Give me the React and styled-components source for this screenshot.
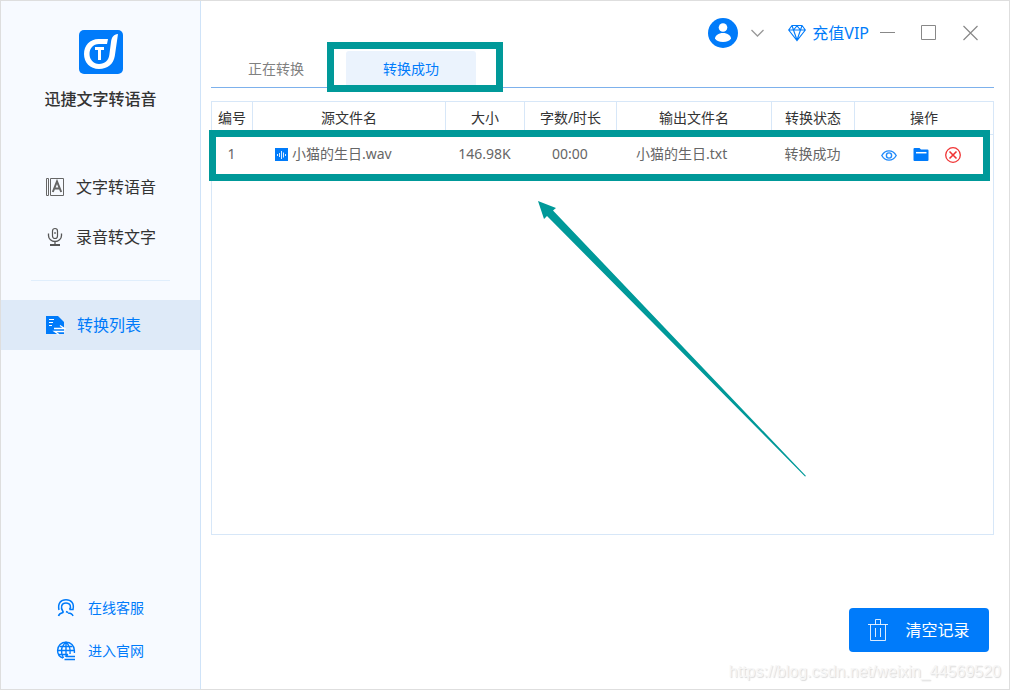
import React from 'react';
import styled, { createGlobalStyle } from 'styled-components';

const blue = '#007bfa';
const teal = '#009999';
const line = '#d7e7f8';

const GlobalStyle = createGlobalStyle`
  *, *::before, *::after { box-sizing: border-box; }
  body {
    margin: 0;
    color: #333;
    background: #fff;
    font-family: "Noto Sans", "Noto Sans CJK SC", sans-serif;
    font-size: 14px;
    line-height: 20px;
  }
  button { font: inherit; color: inherit; background: none; border: 0; padding: 0; cursor: pointer; }
  a { text-decoration: none; color: inherit; }
  svg { display: block; flex: none; }
`;

const Window = styled.div`
  position: relative;
  display: grid;
  grid-template-columns: 200px 1fr;
  min-height: 100vh;
  border: 1px solid #dedede;
`;

const Sidebar = styled.aside`
  display: flex;
  flex-direction: column;
  background: #f7faff;
  border-right: 1px solid #cfe3f8;
`;

const Brand = styled.div`
  display: flex;
  flex-direction: column;
  align-items: center;
  gap: 13px;
  padding-top: 29px;
  height: 161px;
`;

const BrandName = styled.h1`
  margin: 0;
  font-size: 16px;
  font-weight: 500;
  line-height: 24px;
`;

const NavItem = styled.button`
  display: flex;
  align-items: center;
  gap: 11px;
  width: 100%;
  height: 50px;
  padding-left: 44px;
  font-size: 16px;
  line-height: 24px;
  color: ${(p) => (p.$active ? blue : '#333')};
  background: ${(p) => (p.$active ? '#deeaf8' : 'transparent')};
`;

const Divider = styled.hr`
  height: 1px;
  margin: 18px 30px 19px;
  border: 0;
  background: #e0eefc;
`;

const SideLinks = styled.div`
  display: flex;
  flex-direction: column;
  gap: 23px;
  margin-top: auto;
  padding: 0 0 28px 55px;
`;

const SideLink = styled.a`
  display: flex;
  align-items: center;
  gap: 12px;
  color: ${blue};
`;

const Main = styled.main`
  display: flex;
  flex-direction: column;
  min-width: 0;
  padding: 0 15px 37px 10px;
`;

const TitleBar = styled.header`
  display: flex;
  justify-content: flex-end;
  align-items: center;
  height: 33px;
  margin-top: 15px;
  padding-right: 16px;
`;

const IconButton = styled.button`
  display: flex;
  margin-left: ${(p) => p.$gap || 0}px;
`;

const VipButton = styled.button`
  display: flex;
  align-items: center;
  gap: 6px;
  margin: 0 11px 0 24px;
  font-size: 16px;
  line-height: 24px;
  color: ${blue};
`;

const Tabs = styled.div`
  display: flex;
  gap: 5px;
  padding-top: 2px;
  border-bottom: 1px solid #7db1ec;
`;

const Tab = styled.button`
  position: relative;
  width: 130px;
  height: 36px;
  border-radius: 3px 3px 0 0;
  color: ${(p) => (p.$active ? blue : '#808080')};
  background: ${(p) => (p.$active ? '#ebf3fd' : 'transparent')};
`;

const Marker = styled.span`
  position: absolute;
  inset: ${(p) => p.$inset};
  height: ${(p) => p.$height}px;
  border: 7px solid ${teal};
  pointer-events: none;
`;

const Panel = styled.section`
  position: relative;
  flex: 1;
  margin: 13px 0 73px;
  border: 1px solid ${line};
`;

const Table = styled.table`
  width: 100%;
  table-layout: fixed;
  border-collapse: separate;
  border-spacing: 0;
`;

const Col = styled.col`
  width: ${(p) => (p.$w ? `${p.$w}px` : 'auto')};
`;

const Th = styled.th`
  height: 33px;
  padding: 0;
  font-weight: 400;
  border-bottom: 1px solid ${line};
  border-right: 1px solid ${line};
  &:last-child { border-right: 0; }
`;

const Td = styled.td`
  height: 38px;
  padding: 0 2px 0 ${(p) => p.$indent || 0}px;
  text-align: ${(p) => (p.$indent ? 'left' : 'center')};
  color: #666;
`;

const FileName = styled.span`
  display: flex;
  align-items: center;
  gap: 4px;
`;

const Actions = styled.span`
  display: flex;
  justify-content: center;
  gap: 16px;
  padding: 2px 4px 0 0;
`;

const Footer = styled.footer`
  display: flex;
  justify-content: flex-end;
  padding-right: 5px;
`;

const ClearButton = styled.button`
  display: flex;
  align-items: center;
  justify-content: center;
  gap: 17px;
  width: 140px;
  height: 44px;
  border-radius: 4px;
  font-size: 16px;
  color: #fff;
  background: ${blue};
`;

const Watermark = styled.span`
  position: absolute;
  right: 8px;
  bottom: 7px;
  font-family: "Liberation Sans", sans-serif;
  font-size: 16px;
  color: #f6f6f6;
  text-shadow: 1px 1px 1px #dadada;
`;

const Arrow = styled.svg`
  position: absolute;
  left: 326px;
  top: 99px;
  pointer-events: none;
`;

const Logo = () => (
  <svg width="44" height="44" viewBox="0 0 44 44" aria-hidden="true">
    <rect width="44" height="44" rx="5" fill={blue} />
    <path d="M29 9L28 14H20C14 14 10.500 18.500 10.500 24C10.500 29.500 14.500 34 20 34C26 34 29.500 30.500 30.300 25L32 12C32.500 7.500 34.500 4.500 39 4L35.800 26C34.500 34 28.500 39 20 39C11 39 5 32.500 5 24C5 15.500 11 9 19.500 9Z" fill="#fff" />
    <path d="M16 17H25V20H22V30H19V20H16Z" fill="#fff" />
  </svg>
);

const BookIcon = () => (
  <svg width="20" height="20" viewBox="0 0 20 20" fill="none" stroke="#666" aria-hidden="true">
    <path d="M1.500 1.500H3.500V18.500H1.500ZM5.500 1.500H18.500V18.500H5.500Z" />
    <path d="M7.800 15L12 4.500L16.200 15M9.500 11.500H14.500" strokeWidth="2" />
  </svg>
);

const MicIcon = () => (
  <svg width="20" height="20" viewBox="0 0 20 20" fill="none" stroke="#555" aria-hidden="true">
    <rect x="7.500" y="1.500" width="5" height="10" rx="2.500" strokeWidth="1.200" />
    <path d="M3.500 6.500V8.500C3.500 12 6.500 14.500 10 14.500S16.500 12 16.500 8.500V6.500M10 14.500V18" strokeWidth="1.300" />
    <path d="M5 18H15" strokeWidth="2" />
    <path d="M10 5V7" strokeWidth="1.200" />
  </svg>
);

const ListIcon = () => (
  <svg width="21" height="20" viewBox="0 0 21 20" fill="none" aria-hidden="true">
    <path d="M1 1H13L19 7V19H1Z" fill={blue} />
    <path d="M4 4.500H9M4 7.500H8M4 10.500H7" stroke="#fff" />
    <path d="M9 13.500H19.500L15 10.500M19.500 16.500H9.500L14 19.500" stroke="#fff" strokeWidth="1.300" />
  </svg>
);

const ServiceIcon = () => (
  <svg width="20" height="20" viewBox="0 0 20 20" fill="none" stroke={blue} strokeWidth="1.500" aria-hidden="true">
    <path d="M3 12C1.500 5 5 1.700 10 1.700C15 1.700 18.500 5 17 11.500H13.500" />
    <path d="M7 13.500C4 9.500 5.500 5 10 5C14.500 5 15.500 9 13.500 11.500" />
    <path d="M2.500 18C3 15.500 5 15 7 14.500V13M10 13.500L12 14.500M12 15C14.500 15.200 16.500 16 17 18" />
  </svg>
);

const GlobeIcon = () => (
  <svg width="20" height="20" viewBox="0 0 20 20" fill="none" stroke={blue} strokeWidth="1.400" aria-hidden="true">
    <path d="M7 17C3.500 16 1.600 13 1.600 9.500C1.600 4.500 5.300 1.200 10 1.200S18.400 4.500 18.400 9.500V12" />
    <path d="M10 1.200V13M7.500 17C4.500 12 4.500 5.500 10 1.200C14.500 5 14.500 9.500 14 13M3.500 5.500H16.500M1.600 9.500H18.400M2.500 13.500H12" />
    <path d="M10 15.500H19M8.500 18.500H19M9 15.500L12 13.500" strokeWidth="1.400" />
  </svg>
);

const AvatarIcon = () => (
  <svg width="30" height="30" viewBox="0 0 30 30" aria-hidden="true">
    <circle cx="15" cy="15" r="15" fill={blue} />
    <circle cx="15" cy="9.500" r="4.300" fill="#fff" />
    <path d="M7 20.500C7 17.500 10.500 15 15 15S23 17.500 23 20.500C22 22.800 19 24 15 24S8 22.800 7 20.500Z" fill="#fff" />
  </svg>
);

const DiamondIcon = () => (
  <svg width="18" height="18" viewBox="0 0 18 18" fill="none" stroke={blue} strokeWidth="1.100" aria-hidden="true">
    <path d="M4 1.500H14L17.300 6L9 16.500L.7 6ZM.7 6H17.300M4 1.500L5.500 6L9 16L12.500 6L14 1.500M5.500 6L9 1.800L12.500 6" />
  </svg>
);

const WaveIcon = () => (
  <svg width="13" height="13" viewBox="0 0 13 13" aria-hidden="true">
    <rect width="13" height="13" fill={blue} />
    <path d="M2.500 6V8M4.500 5V9M6.500 3V11M8.500 4.500V9.500M10.500 6V8" stroke="#fff" strokeOpacity=".85" />
  </svg>
);

const EyeIcon = () => (
  <svg width="16" height="16" viewBox="0 0 16 16" fill="none" stroke="#1f8afb" strokeWidth="1.400" aria-hidden="true">
    <path d="M.8 8.500C4.300 2.300 11.700 2.300 15.200 8.500C11.700 14.700 4.300 14.700 .8 8.500Z" />
    <circle cx="8" cy="8.500" r="2.600" />
  </svg>
);

const FolderIcon = () => (
  <svg width="16" height="16" viewBox="0 0 16 16" aria-hidden="true">
    <path d="M.5 2Q.5 1 1.500 1H6.500L8 2.500H14.500Q15.500 2.500 15.500 3.500V13Q15.500 14 14.500 14H1.500Q.5 14 .5 13Z" fill={blue} />
    <path d="M3 5.700H13.500" stroke="#fff" strokeWidth="1.500" />
  </svg>
);

const RemoveIcon = () => (
  <svg width="16" height="16" viewBox="0 0 16 16" fill="none" stroke="#f03434" strokeWidth="1.300" aria-hidden="true">
    <circle cx="8" cy="8" r="7.300" />
    <path d="M4.500 4.500L11.500 11.500M11.500 4.500L4.500 11.500" strokeWidth="1.600" />
  </svg>
);

const TrashIcon = () => (
  <svg width="20" height="24" viewBox="0 0 20 24" fill="none" stroke="#fff" strokeOpacity=".85" aria-hidden="true">
    <path d="M0 6.500H20M7.500 6.500V1.500H12.500V6.500M2.500 6.500V22.500H17.500V6.500M7.500 10V19M12.500 10V19" />
  </svg>
);

const columns = [
  ['编号', 41],
  ['源文件名', 193],
  ['大小', 79],
  ['字数/时长', 92],
  ['输出文件名', 155],
  ['转换状态', 83],
  ['操作', 0],
];

export default function App() {
  return (
    <>
      <GlobalStyle />
      <Window>
        <Sidebar>
          <Brand>
            <Logo />
            <BrandName>迅捷文字转语音</BrandName>
          </Brand>
          <nav>
            <NavItem type="button"><BookIcon />文字转语音</NavItem>
            <NavItem type="button"><MicIcon />录音转文字</NavItem>
            <Divider />
            <NavItem type="button" $active><ListIcon />转换列表</NavItem>
          </nav>
          <SideLinks>
            <SideLink href="#service"><ServiceIcon />在线客服</SideLink>
            <SideLink href="#site"><GlobeIcon />进入官网</SideLink>
          </SideLinks>
        </Sidebar>
        <Main>
          <TitleBar>
            <IconButton type="button" aria-label="账户"><AvatarIcon /></IconButton>
            <IconButton type="button" aria-label="展开" $gap={13}>
              <svg width="13" height="8" viewBox="0 0 13 8" fill="none" stroke="#999" strokeWidth="1.300"><path d="M.5 1L6.500 7L12.500 1" /></svg>
            </IconButton>
            <VipButton type="button"><DiamondIcon />充值VIP</VipButton>
            <IconButton type="button" aria-label="最小化">
              <svg width="16" height="16" viewBox="0 0 16 16" stroke="#888"><path d="M0 7.500H15" /></svg>
            </IconButton>
            <IconButton type="button" aria-label="最大化" $gap={25}>
              <svg width="16" height="16" viewBox="0 0 16 16" fill="none" stroke="#888"><path d="M.5 .5H14.500V14.500H.5Z" /></svg>
            </IconButton>
            <IconButton type="button" aria-label="关闭" $gap={26}>
              <svg width="15" height="16" viewBox="0 0 15 16" stroke="#888" strokeWidth="1.200"><path d="M.5 1L14.500 15M14.500 1L.5 15" /></svg>
            </IconButton>
          </TitleBar>
          <Tabs role="tablist">
            <Tab type="button" role="tab" aria-selected="false">正在转换</Tab>
            <Tab type="button" role="tab" aria-selected="true" $active>
              转换成功
              <Marker $inset="-9px -27px auto -19px" $height={50} />
            </Tab>
          </Tabs>
          <Panel>
            <Table>
              <colgroup>
                {columns.map(([name, w]) => <Col key={name} $w={w} />)}
              </colgroup>
              <thead>
                <tr>{columns.map(([name]) => <Th key={name} scope="col">{name}</Th>)}</tr>
              </thead>
              <tbody>
                <tr>
                  <Td>1</Td>
                  <Td $indent={22}><FileName><WaveIcon />小猫的生日.wav</FileName></Td>
                  <Td>146.98K</Td>
                  <Td>00:00</Td>
                  <Td $indent={19}>小猫的生日.txt</Td>
                  <Td>转换成功</Td>
                  <Td>
                    <Actions>
                      <IconButton type="button" aria-label="查看"><EyeIcon /></IconButton>
                      <IconButton type="button" aria-label="打开文件夹"><FolderIcon /></IconButton>
                      <IconButton type="button" aria-label="删除"><RemoveIcon /></IconButton>
                    </Actions>
                  </Td>
                </tr>
              </tbody>
            </Table>
            <Marker $inset="28px 3px auto -3px" $height={51} />
            <Arrow width="270" height="276" viewBox="0 0 270 276" aria-hidden="true">
              <path d="M0 0L18 7L15 9.500L268 275L267 275.500L9 15L6 18Z" fill={teal} />
            </Arrow>
          </Panel>
          <Footer>
            <ClearButton type="button"><TrashIcon />清空记录</ClearButton>
          </Footer>
        </Main>
        <Watermark>https://blog.csdn.net/weixin_44569520</Watermark>
      </Window>
    </>
  );
}
